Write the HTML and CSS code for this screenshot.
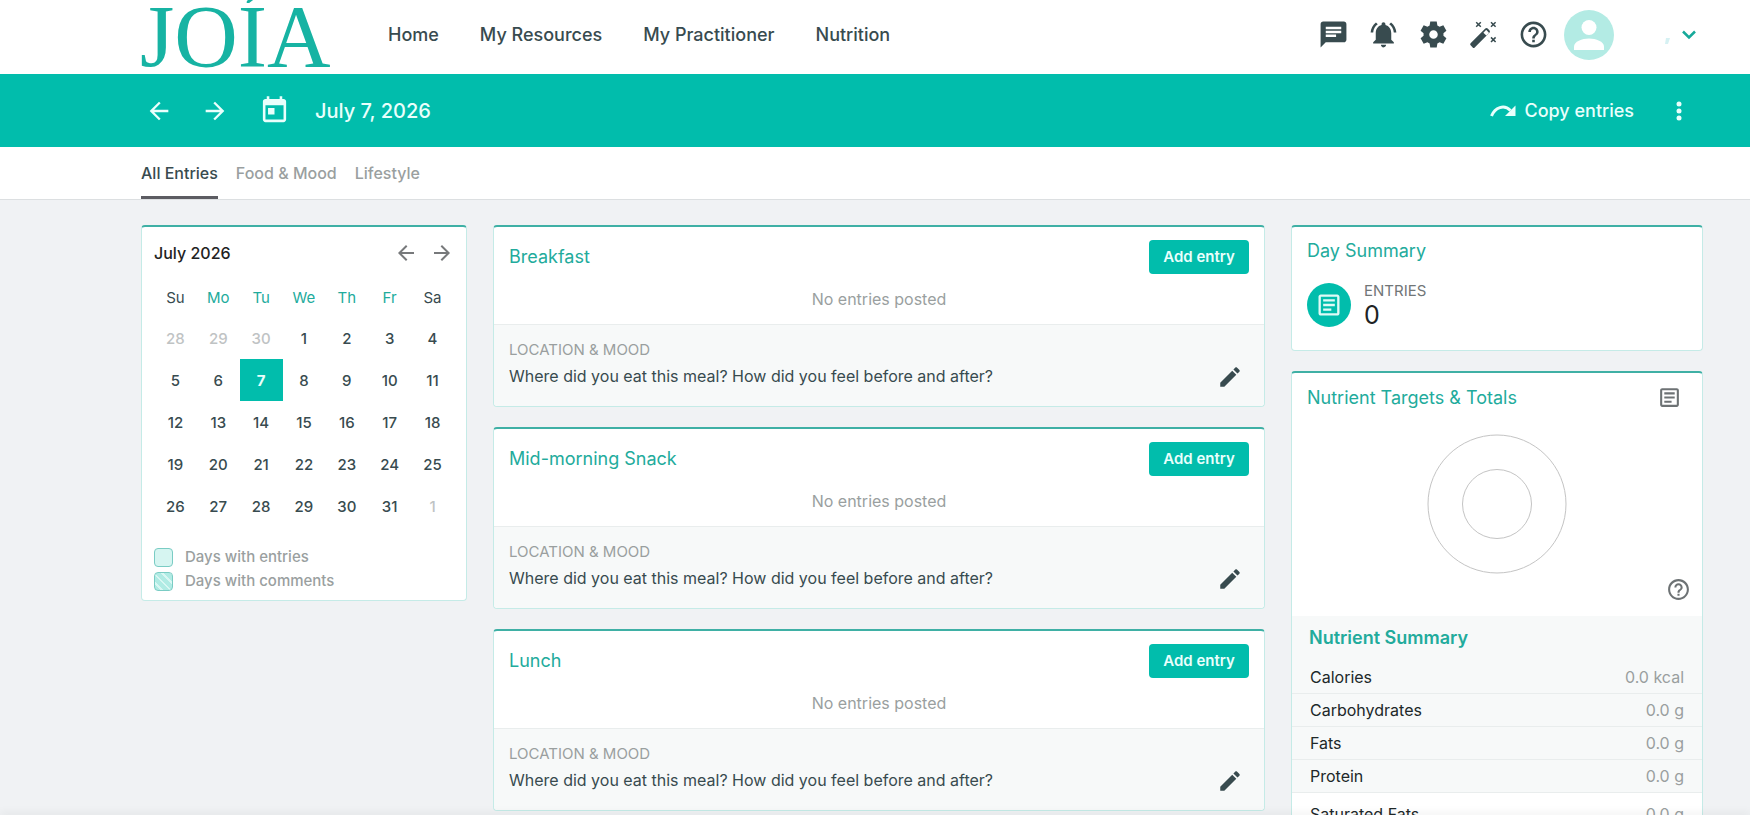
FILE: index.html
```html
<!DOCTYPE html>
<html lang="en">
<head>
<meta charset="utf-8">
<title>Joía – Journal</title>
<link rel="stylesheet" href="styles.css">
</head>
<body>
<svg class="sprite" aria-hidden="true">
  <symbol id="back" viewBox="0 0 24 24"><path d="M20 11H7.83l5.59-5.59L12 4l-8 8 8 8 1.41-1.41L7.83 13H20v-2z"/></symbol>
  <symbol id="forward" viewBox="0 0 24 24"><path d="M12 4l-1.41 1.41L16.17 11H4v2h12.17l-5.58 5.59L12 20l8-8z"/></symbol>
  <symbol id="help" viewBox="0 0 24 24"><path d="M11 18h2v-2h-2v2zm1-16C6.48 2 2 6.48 2 12s4.48 10 10 10 10-4.48 10-10S17.52 2 12 2zm0 18c-4.41 0-8-3.59-8-8s3.59-8 8-8 8 3.59 8 8-3.59 8-8 8zm0-14c-2.21 0-4 1.79-4 4h2c0-1.1.9-2 2-2s2 .9 2 2c0 2-3 1.75-3 5h2c0-2.25 3-2.5 3-5 0-2.21-1.79-4-4-4z"/></symbol>
  <symbol id="article" viewBox="0 0 24 24"><path d="M19 5v14H5V5h14m0-2H5c-1.1 0-2 .9-2 2v14c0 1.100.9 2 2 2h14c1.100 0 2-.9 2-2V5c0-1.100-.9-2-2-2zm-5 14H7v-2h7v2zm3-4H7v-2h10v2zm0-4H7V7h10v2z"/></symbol>
  <symbol id="pencil" viewBox="0 0 24 24"><path d="M3 17.250V21h3.750L17.810 9.940l-3.750-3.750L3 17.250zM20.710 7.040c.39-.39.39-1.020 0-1.410l-2.340-2.340c-.39-.39-1.020-.39-1.410 0l-1.830 1.830 3.750 3.750 1.830-1.830z"/></symbol>
</svg>

<header class="site-header">
  <a class="logo" href="#">JOÍA</a>
  <nav class="main-nav" aria-label="Main">
    <a href="#">Home</a>
    <a href="#">My Resources</a>
    <a href="#">My Practitioner</a>
    <a href="#">Nutrition</a>
  </nav>
  <div class="header-tools">
    <button class="icon-btn" aria-label="Messages"><svg viewBox="0 0 24 24"><path d="M20 2H4c-1.100 0-1.990.9-1.990 2L2 22l4-4h14c1.100 0 2-.9 2-2V4c0-1.100-.9-2-2-2zM6 6h12v2H6V6zm8 8H6v-2h8v2zm4-3H6V9h12v2z"/></svg></button>
    <button class="icon-btn" aria-label="Notifications"><svg viewBox="0 0 24 24"><path d="M7.580 4.080L6.150 2.650C3.750 4.480 2.170 7.300 2.030 10.500h2c.15-2.650 1.510-4.970 3.550-6.420zm12.390 6.420h2c-.15-3.200-1.730-6.020-4.120-7.850l-1.420 1.430c2.020 1.450 3.390 3.770 3.540 6.420zM18 11c0-3.070-1.640-5.640-4.500-6.320V4c0-.83-.67-1.500-1.500-1.500s-1.500.67-1.500 1.500v.68C7.630 5.360 6 7.920 6 11v5l-2 2v1h16v-1l-2-2v-5zm-6 11c.14 0 .27-.01.4-.04.65-.14 1.180-.58 1.440-1.180.1-.24.15-.5.15-.78h-4c.01 1.100.9 2 2.010 2z"/></svg></button>
    <button class="icon-btn" aria-label="Settings"><svg viewBox="0 0 24 24"><path fill-rule="evenodd" d="M9.500 2h5l.5 3 1.700 1 2.900-1.100 2.400 4.200L19.700 11v2l2.300 1.900-2.400 4.200-2.900-1.100-1.700 1-.5 3h-5L9 19l-1.700-1-2.900 1.100L2 14.900 4.300 13v-2L2 9.100l2.400-4.200L7.300 6 9 5zM12 8.700a3.300 3.300 0 1 0 0 6.600 3.300 3.300 0 0 0 0-6.600z"/></svg></button>
    <button class="icon-btn" aria-label="Assistant"><svg viewBox="0 0 31 31"><path fill-rule="evenodd" d="M2.600 24.300L17.300 9.600q1.200-1.200 2.400 0l1.700 1.700q1.200 1.200 0 2.400L6.700 28.400q-1 1-2 0l-2.100-2.100q-1-1 0-2zM15.400 13.700l2.900 2.900 2.400-2.400q.4-.4 0-.8l-2.100-2.100q-.4-.4-.8 0z"/><path class="sparks" d="M8.200 3.200l4.600 4.600m0-4.600L8.200 7.800M23 3.200l4.600 4.600m0-4.600L23 7.800M23 18.400l4.600 4.600m0-4.600L23 23"/></svg></button>
    <button class="icon-btn" aria-label="Help"><svg><use href="#help"/></svg></button>
    <button class="account" aria-label="Account menu">
      <svg class="avatar" viewBox="0 0 50 50"><circle cx="25" cy="25" r="25" fill="#b3ebe4"/><circle cx="25" cy="17.500" r="7.500" fill="#fff"/><path d="M10 40v-3.500C10 31.500 18 28.500 25 28.500s15 3 15 8V40z" fill="#fff"/></svg>
      <svg class="speck" viewBox="0 0 6 8"><path d="M2 1h4L4 7H1z"/></svg>
      <svg class="chevron" viewBox="0 0 16 10"><path d="M2 1.500l6 6 6-6"/></svg>
    </button>
  </div>
</header>

<section class="date-bar" aria-label="Journal date">
  <button class="icon-btn" aria-label="Previous day"><svg><use href="#back"/></svg></button>
  <button class="icon-btn" aria-label="Next day"><svg><use href="#forward"/></svg></button>
  <button class="pick-date" aria-label="Pick a date"><svg viewBox="0 0 24 24"><path d="M19 3h-1V1h-2v2H8V1H6v2H5c-1.110 0-1.990.9-1.990 2L3 19c0 1.100.89 2 2 2h14c1.100 0 2-.9 2-2V5c0-1.100-.9-2-2-2zm0 16H5V8h14v11zM7 10h5v5H7z"/></svg></button>
  <h1 class="date">July 7, 2026</h1>
  <button class="copy"><svg viewBox="0 0 26 14"><path d="M1.500 12C5 3.500 14 0 20.500 6.500" fill="none" stroke="currentColor" stroke-width="3"/><path d="M25.500 1.500v10.500H15z"/></svg>Copy entries</button>
  <button class="more" aria-label="More"><svg viewBox="0 0 6 20"><circle cx="3" cy="3" r="2.500"/><circle cx="3" cy="10" r="2.500"/><circle cx="3" cy="17" r="2.500"/></svg></button>
</section>

<nav class="tabs" aria-label="Entry types">
  <a class="tab active" href="#">All Entries</a>
  <a class="tab" href="#">Food &amp; Mood</a>
  <a class="tab" href="#">Lifestyle</a>
</nav>

<main class="content">
  <aside class="card calendar">
    <div class="cal-head">
      <h2>July 2026</h2>
      <button class="icon-btn" aria-label="Previous month"><svg><use href="#back"/></svg></button>
      <button class="icon-btn" aria-label="Next month"><svg><use href="#forward"/></svg></button>
    </div>
    <table class="cal-grid">
      <thead><tr><th>Su</th><th class="weekday">Mo</th><th class="weekday">Tu</th><th class="weekday">We</th><th class="weekday">Th</th><th class="weekday">Fr</th><th>Sa</th></tr></thead>
      <tbody>
        <tr><td class="other">28</td><td class="other">29</td><td class="other">30</td><td>1</td><td>2</td><td>3</td><td>4</td></tr>
        <tr><td>5</td><td>6</td><td class="selected">7</td><td>8</td><td>9</td><td>10</td><td>11</td></tr>
        <tr><td>12</td><td>13</td><td>14</td><td>15</td><td>16</td><td>17</td><td>18</td></tr>
        <tr><td>19</td><td>20</td><td>21</td><td>22</td><td>23</td><td>24</td><td>25</td></tr>
        <tr><td>26</td><td>27</td><td>28</td><td>29</td><td>30</td><td>31</td><td class="other">1</td></tr>
      </tbody>
    </table>
    <ul class="legend">
      <li><span class="swatch"></span>Days with entries</li>
      <li><span class="swatch striped"></span>Days with comments</li>
    </ul>
  </aside>

  <div class="column">
    <section class="card meal">
      <div class="meal-head"><h2>Breakfast</h2><button class="add">Add entry</button></div>
      <p class="empty">No entries posted</p>
      <div class="mood"><div><h3>LOCATION &amp; MOOD</h3><p>Where did you eat this meal? How did you feel before and after?</p></div><button class="edit" aria-label="Edit location and mood"><svg><use href="#pencil"/></svg></button></div>
    </section>
    <section class="card meal">
      <div class="meal-head"><h2>Mid-morning Snack</h2><button class="add">Add entry</button></div>
      <p class="empty">No entries posted</p>
      <div class="mood"><div><h3>LOCATION &amp; MOOD</h3><p>Where did you eat this meal? How did you feel before and after?</p></div><button class="edit" aria-label="Edit location and mood"><svg><use href="#pencil"/></svg></button></div>
    </section>
    <section class="card meal">
      <div class="meal-head"><h2>Lunch</h2><button class="add">Add entry</button></div>
      <p class="empty">No entries posted</p>
      <div class="mood"><div><h3>LOCATION &amp; MOOD</h3><p>Where did you eat this meal? How did you feel before and after?</p></div><button class="edit" aria-label="Edit location and mood"><svg><use href="#pencil"/></svg></button></div>
    </section>
  </div>

  <div class="column">
    <section class="card summary">
      <h2>Day Summary</h2>
      <div class="stat">
        <span class="badge"><svg><use href="#article"/></svg></span>
        <div><p class="stat-label">ENTRIES</p><p class="stat-value">0</p></div>
      </div>
    </section>
    <section class="card nutrients">
      <div class="nutrient-head"><h2>Nutrient Targets &amp; Totals</h2><button class="small-icon" aria-label="Details"><svg><use href="#article"/></svg></button></div>
      <svg class="chart" viewBox="0 0 140 140"><circle cx="70" cy="70" r="69"/><circle cx="70" cy="70" r="34.500"/></svg>
      <div class="chart-help"><button class="small-icon" aria-label="About this chart"><svg><use href="#help"/></svg></button></div>
      <table class="totals">
        <caption>Nutrient Summary</caption>
        <tbody>
        <tr><th scope="row">Calories</th><td>0.0 kcal</td></tr>
        <tr><th scope="row">Carbohydrates</th><td>0.0 g</td></tr>
        <tr><th scope="row">Fats</th><td>0.0 g</td></tr>
        <tr><th scope="row">Protein</th><td>0.0 g</td></tr>
        <tr class="detail"><th scope="row">Saturated Fats</th><td>0.0 g</td></tr>
        </tbody>
      </table>
    </section>
  </div>
</main>
<footer class="bottom-bar"></footer>
</body>
</html>
```
FILE: styles.css
```css
:root {
  --teal: #01bdac;
  --teal-text: #22ab9c;
  --ink: #384b4f;
  --muted: #9a9f9f;
  --line: #e9eded;
  --panel: #f7f9f9;
}

* { box-sizing: border-box; }

body {
  margin: 0;
  height: 100vh;
  overflow: hidden;
  background: #f0f2f4;
  color: var(--ink);
  font: 16px/24px Inter, "Liberation Sans", sans-serif;
}

h1, h2, h3, p, ul { margin: 0; padding: 0; font-weight: 400; }
ul { list-style: none; }
a { color: inherit; text-decoration: none; }
button { padding: 0; border: 0; background: none; color: inherit; font: inherit; cursor: pointer; }
svg { display: block; fill: currentColor; }
table { border-collapse: collapse; }
.sprite { position: absolute; width: 0; height: 0; }

.site-header {
  display: flex;
  align-items: center;
  height: 74px;
  padding: 0 53px 5px 140px;
  overflow: hidden;
  background: #fff;
}
.logo { flex: none; width: 248px; padding-top: 4px; color: #17b3a3; font: 88px/88px "Liberation Serif", serif; }
.main-nav { display: flex; gap: 41px; font-size: 18px; font-weight: 500; }
.header-tools { display: flex; align-items: center; gap: 19px; margin-left: auto; }
.icon-btn svg { width: 31px; height: 31px; }
.sparks { fill: none; stroke: currentColor; stroke-width: 1.500; }
.account { display: flex; align-items: center; margin-left: -4px; }
.avatar { width: 50px; height: 50px; }
.speck { width: 6px; height: 8px; margin: 12px 11px 0 50px; fill: #d6f1f3; }
.chevron { width: 16px; height: 10px; fill: none; stroke: #17a99a; stroke-width: 2.500; }

.date-bar {
  display: flex;
  align-items: center;
  height: 73px;
  padding: 0 68px 0 145px;
  background: var(--teal);
  color: #e9fffc;
}
.date-bar .icon-btn { margin-right: 28px; }
.date-bar .icon-btn svg { width: 28px; height: 28px; }
.pick-date { margin: 0 25px 0 2px; }
.pick-date svg { width: 31px; height: 31px; }
.date { font-size: 20px; font-weight: 500; }
.copy { display: flex; align-items: center; gap: 8px; margin-left: auto; font-size: 18px; font-weight: 500; }
.copy svg { width: 26px; height: 14px; }
.more { margin-left: 42px; }
.more svg { width: 6px; height: 20px; }

.tabs {
  display: flex;
  gap: 18px;
  height: 53px;
  padding: 0 141px;
  border-bottom: 1px solid #dcdfe1;
  background: #fff;
}
.tab { padding-top: 14px; color: var(--muted); font-weight: 500; }
.tab.active { border-bottom: 3px solid #5c5c62; color: var(--ink); }

.content {
  display: grid;
  grid-template-columns: 326px 1fr 412px;
  align-items: start;
  gap: 26px;
  padding: 25px 47px 0 141px;
}
.column { display: grid; gap: 20px; }
.card {
  border: 1px solid #c5ebe7;
  border-top: 2px solid #3fb0a5;
  border-radius: 4px;
  background: #fff;
}
.card h2 { color: var(--teal-text); font-size: 18px; font-weight: 400; }

.calendar { padding: 0 12px 7px; }
.cal-head { display: flex; align-items: center; gap: 12px; height: 51px; }
.card.calendar h2 { flex: 1; color: #222; font-size: 16px; font-weight: 500; }
.cal-head svg { width: 24px; height: 24px; fill: #77797b; }
.cal-grid { width: 100%; table-layout: fixed; text-align: center; font-size: 15px; font-weight: 500; }
.cal-grid th { height: 39px; padding: 0; font-weight: 400; }
.cal-grid .weekday { color: var(--teal-text); }
.cal-grid td { height: 42px; padding: 2px 0 0; }
.cal-grid .other { color: #bfc3c4; }
.cal-grid .selected { background: var(--teal); color: #e9fffc; font-weight: 700; }
.legend { padding-top: 18px; color: var(--muted); font-size: 15px; font-weight: 500; }
.legend li { display: flex; align-items: center; gap: 12px; }
.swatch { width: 19px; height: 19px; border: 1px solid #7accc4; border-radius: 4px; background: #d6f5f1; }
.striped { background: repeating-linear-gradient(45deg, #b0ebe4 0 4px, #d9f7f3 4px 6px); }

.meal-head { display: flex; align-items: center; justify-content: space-between; padding: 13px 15px 0; }
.add { width: 100px; height: 34px; border-radius: 4px; background: var(--teal); color: #e9fffc; font-size: 15px; font-weight: 600; }
.empty { padding: 13px 0; color: var(--muted); text-align: center; }
.mood {
  display: flex;
  align-items: flex-end;
  justify-content: space-between;
  padding: 13px 21px 16px 15px;
  border-top: 1px solid var(--line);
  border-radius: 0 0 4px 4px;
  background: var(--panel);
}
.mood h3 { color: var(--muted); font-size: 15px; }
.mood p { padding: 2px 0; }
.edit svg { width: 26px; height: 26px; }

.summary { height: 126px; padding: 12px 15px; }
.stat { display: flex; align-items: center; gap: 13px; padding-top: 18px; }
.badge { display: grid; place-items: center; width: 44px; height: 44px; border-radius: 50%; background: var(--teal); color: #dffaf6; }
.badge svg { width: 28px; height: 28px; }
.stat-label { color: #717677; font-size: 15px; line-height: 20px; }
.stat-value { color: #202324; font-size: 25px; line-height: 28px; }

.nutrient-head { display: flex; align-items: center; justify-content: space-between; padding: 12px 20px 0 15px; }
.small-icon { color: #6d7274; }
.small-icon svg { width: 25px; height: 25px; }
.chart { width: 140px; height: 140px; margin: 24px auto 0; fill: none; stroke: #c4c4c4; }
.chart-help { display: flex; justify-content: flex-end; padding: 3px 11px 14px; }
.totals { width: 100%; background: var(--panel); color: #202829; }
.totals caption { padding: 10px 17px; background: var(--panel); color: var(--teal-text); font-size: 18px; font-weight: 600; text-align: left; }
.totals th { height: 33px; padding: 1px 18px 0; font-weight: 400; text-align: left; }
.totals td { padding: 1px 18px 0; color: var(--muted); text-align: right; }
.totals tr { border-bottom: 1px solid var(--line); }
.totals .detail { background: #fff; }
.totals .detail th { height: 43px; }

.bottom-bar { position: fixed; inset: auto 0 0; height: 2px; background: #fff; box-shadow: 0 -1px 8px rgba(0, 0, 0, .16); }
```
